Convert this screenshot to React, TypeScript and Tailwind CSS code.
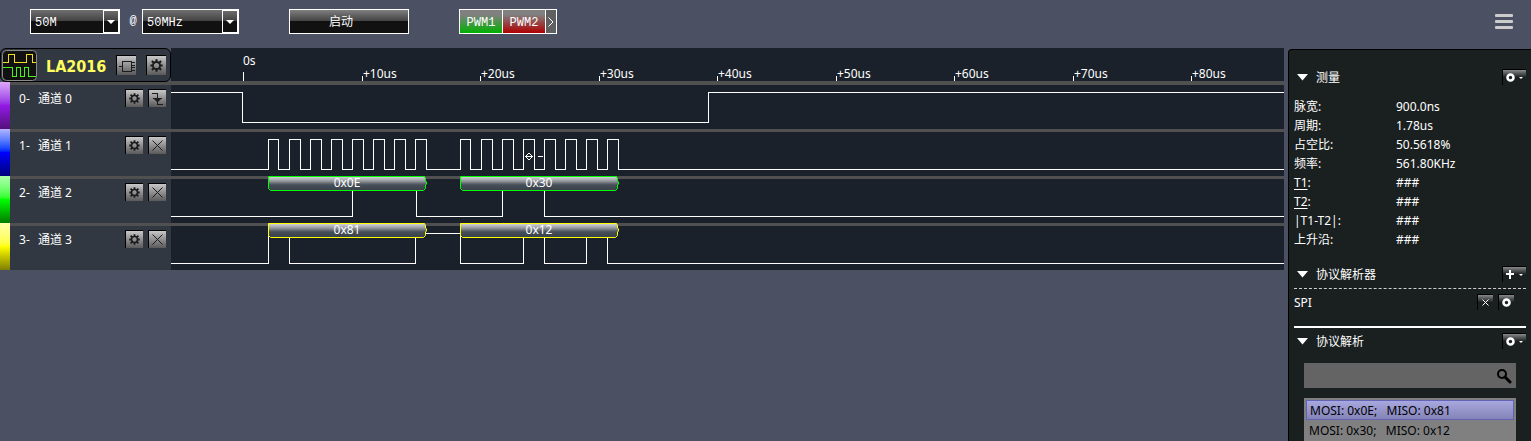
import type { ReactNode } from 'react';

const HIGH = 10.5;
const LOW = 40.5;
const TICK_SPACING = 118.5;
const TICK_START = 72.5;

type Frame = { from: number; to: number; text: string };

type Channel = {
  id: number;
  startsHigh: boolean;
  edges: number[];
  trigger: 'falling' | 'none';
  strip: string;
  frames: Frame[];
  frameColor: string;
};

const channels: Channel[] = [
  {
    id: 0,
    startsHigh: true,
    edges: [71, 537],
    trigger: 'falling',
    strip: 'from-[#dda6f6] via-[#9318e4] to-[#53107c]',
    frames: [],
    frameColor: '#ffffff',
  },
  {
    id: 1,
    startsHigh: false,
    edges: [
      97, 107, 118, 129, 139, 150, 160, 171, 181, 192, 202, 213, 223, 234, 244, 255,
      289, 299, 310, 321, 331, 342, 352, 363, 373, 384, 394, 405, 415, 426, 436, 447,
    ],
    trigger: 'none',
    strip: 'from-[#b4b4ff] via-[#0000ff] to-[#00007c]',
    frames: [],
    frameColor: '#ffffff',
  },
  {
    id: 2,
    startsHigh: false,
    edges: [181, 245, 331, 373],
    trigger: 'none',
    strip: 'from-[#aaffaa] via-[#00ff00] to-[#007c00]',
    frames: [
      { from: 97, to: 255, text: '0x0E' },
      { from: 289, to: 447, text: '0x30' },
    ],
    frameColor: '#00ff00',
  },
  {
    id: 3,
    startsHigh: false,
    edges: [97, 118, 244, 289, 352, 373, 415, 436],
    trigger: 'none',
    strip: 'from-[#ffffaa] via-[#ffff00] to-[#808000]',
    frames: [
      { from: 97, to: 255, text: '0x81' },
      { from: 289, to: 447, text: '0x12' },
    ],
    frameColor: '#ffff00',
  },
];

const measurements = [
  { label: '脉宽:', value: '900.0ns' },
  { label: '周期:', value: '1.78us' },
  { label: '占空比:', value: '50.5618%' },
  { label: '频率:', value: '561.80KHz' },
  { label: 'T1', value: '###', underlined: true },
  { label: 'T2', value: '###', underlined: true },
  { label: '|T1-T2|:', value: '###' },
  { label: '上升沿:', value: '###' },
];

const ticks = ['0s', '+10us', '+20us', '+30us', '+40us', '+50us', '+60us', '+70us', '+80us'];

function wavePath(startsHigh: boolean, edges: number[]) {
  let high = startsHigh;
  let d = `M0 ${high ? HIGH : LOW}`;
  for (const x of edges) {
    high = !high;
    d += `H${x + 0.5}V${high ? HIGH : LOW}`;
  }
  return d;
}

function GearIcon({ size }: { size: number }) {
  return (
    <svg width={size} height={size} viewBox="0 0 11 11" fill="none" stroke="#1c1c1c" aria-hidden="true">
      <circle cx="5.5" cy="5.5" r="3" strokeWidth="1.6" />
      <path d="M5.5 0.3V2.5M5.5 8.5V10.7M0.3 5.5H2.5M8.5 5.5H10.7" strokeWidth="1.8" />
      <path d="M1.6 1.6L3.3 3.3M7.7 7.7L9.4 9.4M9.4 1.6L7.7 3.3M3.3 7.7L1.6 9.4" strokeWidth="1.8" />
    </svg>
  );
}

function ChipIcon() {
  return (
    <svg width="18" height="18" viewBox="0 0 18 18" fill="none" stroke="#1c1c1c" shapeRendering="crispEdges" aria-hidden="true">
      <path d="M4.5 4.5H13.5V14.5H4.5ZM1 9.5H4.5M13.5 5.5H17M13.5 8.5H17M13.5 10.5H17M13.5 13.5H17" />
    </svg>
  );
}

function RailButton({ label, large, children }: { label: string; large?: boolean; children: ReactNode }) {
  return (
    <button
      type="button"
      aria-label={label}
      className={`flex shrink-0 items-center justify-center border-t border-l border-black bg-linear-to-b from-[#c8c8c8] to-[#5a5a5a] ${large ? 'size-5' : 'size-[18px]'}`}
    >
      {children}
    </button>
  );
}

function Ring() {
  return (
    <svg width="9" height="9" viewBox="0 0 9 9" aria-hidden="true">
      <circle cx="4.5" cy="4.5" r="3" fill="none" stroke="#ffffff" strokeWidth="2.6" />
    </svg>
  );
}

function Plus() {
  return (
    <svg width="9" height="9" viewBox="0 0 9 9" fill="#ffffff" shapeRendering="crispEdges" aria-hidden="true">
      <path d="M3 0h2v3h3v2H5v4H3V5H0V3h3z" />
    </svg>
  );
}

function PanelHeader({ title, action, icon }: { title: string; action: string; icon: ReactNode }) {
  return (
    <div className="flex h-5 items-center">
      <svg width="11" height="7" viewBox="0 0 11 7" className="mr-2 ml-[3px]" aria-hidden="true">
        <path d="M0 0H11L5.5 6.5Z" fill="#ffffff" />
      </svg>
      <h2 className="flex-1 pt-0.5">{title}</h2>
      <button
        type="button"
        aria-label={action}
        className="flex h-4 w-6 items-center justify-center gap-1 border-t border-l border-black bg-linear-to-b from-[#8a8a8a] via-[#1a2020] via-50% to-[#1a2020]"
      >
        {icon}
        <svg width="4" height="2" viewBox="0 0 4 2" aria-hidden="true">
          <path d="M0 0H4L2 2Z" fill="#ffffff" />
        </svg>
      </button>
    </div>
  );
}

function SmallButton({ label, children }: { label: string; children: ReactNode }) {
  return (
    <button
      type="button"
      aria-label={label}
      className="flex size-4 items-center justify-center border-t border-l border-black bg-linear-to-b from-[#8a8a8a] via-[#1a2020] via-50% to-[#1a2020]"
    >
      {children}
    </button>
  );
}

function ToolbarSelect({ label, value, width }: { label: string; value: string; width: string }) {
  return (
    <div className={`relative h-[25px] ${width}`}>
      <select
        aria-label={label}
        defaultValue={value}
        className="size-full appearance-none border border-white bg-linear-to-b from-[#707070] from-0% via-[#404040] via-50% to-[#111111] to-50% pt-0.5 pl-1 font-['Liberation_Mono',monospace] text-xs text-white"
      >
        <option>{value}</option>
      </select>
      <span className="pointer-events-none absolute inset-y-px right-px flex w-4 items-center justify-center border border-white">
        <svg width="8" height="4" viewBox="0 0 8 4" aria-hidden="true">
          <path d="M0 0H8L4 4Z" fill="#ffffff" />
        </svg>
      </span>
    </div>
  );
}

function Toolbar() {
  return (
    <header className="flex h-12 shrink-0 items-start pt-[9px] pr-[18px] pl-[30px] font-['Liberation_Mono','Noto_Sans_CJK_SC',monospace] text-xs text-white">
      <ToolbarSelect label="采样深度" value="50M" width="w-[90px]" />
      <span className="w-[22px] pl-1 text-center leading-[25px]">@</span>
      <ToolbarSelect label="采样率" value="50MHz" width="w-[97px]" />
      <button
        type="button"
        className="ml-[50px] h-[25px] w-[120px] border border-white bg-linear-to-b from-[#808080] from-0% via-[#404040] via-50% to-[#111111] to-50% pt-0.5 pr-4"
      >
        启动
      </button>
      <div className="ml-[50px] flex h-[25px] divide-x divide-white border border-white">
        <button type="button" className="w-[43px] bg-linear-to-b/srgb from-[#808080] from-20% to-[#00b000] pt-0.5">PWM1</button>
        <button type="button" className="w-[43px] bg-linear-to-b/srgb from-[#808080] from-20% to-[#b00000] pt-0.5">PWM2</button>
        <button type="button" aria-label="更多" className="flex w-2.5 items-center justify-center bg-[#606060]">
          <svg width="6" height="10" viewBox="0 0 6 10" fill="none" stroke="#ffffff" aria-hidden="true">
            <path d="M0.5 0.5L5 5L0.5 9.5" />
          </svg>
        </button>
      </div>
      <button type="button" aria-label="菜单" className="mt-[5px] ml-auto">
        <svg width="18" height="16" viewBox="0 0 18 16" fill="#cccccc" aria-hidden="true">
          <rect width="18" height="3" rx="1" />
          <rect y="6" width="18" height="3" rx="1" />
          <rect y="12" width="18" height="3" rx="1" />
        </svg>
      </button>
    </header>
  );
}

function DeviceHeader() {
  return (
    <div className="flex h-[34px] w-[171px] shrink-0 items-center rounded-md border border-black bg-[#323841] pr-1 pl-px">
      <svg width="35" height="31" viewBox="0 0 35 31" fill="none" shapeRendering="crispEdges" aria-hidden="true">
        <rect x="0.5" y="0.5" width="34" height="30" rx="4" fill="#111111" stroke="#8a8a8a" shapeRendering="auto" />
        <path d="M1 12.5H6.5V4.5H12.5V12.5H24.5V4.5H30.5V12.5H34" stroke="#f0dc20" />
        <path d="M1 17.5H10.5V26.5H14.5V17.5H18.5V26.5H22.5V17.5H26.5V26.5H34" stroke="#50f020" />
      </svg>
      <h1 className="ml-[9px] flex-1 pt-[3px] font-['DejaVu_Sans_Condensed','DejaVu_Sans',sans-serif] text-base leading-none font-bold text-[#ffff60]">
        LA2016
      </h1>
      <div className="flex gap-2.5">
        <RailButton label="设备" large>
          <ChipIcon />
        </RailButton>
        <RailButton label="设备设置" large>
          <GearIcon size={13} />
        </RailButton>
      </div>
    </div>
  );
}

function Ruler() {
  return (
    <svg className="h-[34px] min-w-0 flex-1 bg-[#1a212a] text-xs" fill="#ffffff">
      <rect y="33" width="100%" height="1" fill="#505050" />
      {ticks.map((label, i) => {
        const x = Math.floor(TICK_START + i * TICK_SPACING);
        return (
          <g key={label}>
            <rect x={x} y={i === 0 ? 24 : 28} width="1" height={i === 0 ? 9 : 5} />
            <text x={i === 0 ? x : x + 1} y={i === 0 ? 17 : 30}>{label}</text>
          </g>
        );
      })}
    </svg>
  );
}

function ChannelRow({ channel }: { channel: Channel }) {
  const name = `通道 ${channel.id}`;
  const edges = channel.edges;
  const endsHigh = channel.startsHigh !== (edges.length % 2 === 1);
  const restLevel = endsHigh ? HIGH : LOW;
  return (
    <div className="flex h-[47px]">
      <div className={`w-2.5 shrink-0 bg-linear-to-b ${channel.strip}`} />
      <div className="flex w-[161px] shrink-0 items-start border-t-[3px] border-[#505050] bg-[#323841] pt-1 pr-[5px] pl-[9px]">
        <span className="w-[19px] leading-5">{channel.id}-</span>
        <span className="flex-1 leading-5">{name}</span>
        <div className="flex gap-[5px]">
          <RailButton label={`${name} 设置`}>
            <GearIcon size={11} />
          </RailButton>
          <RailButton label={`${name} 触发`}>
            {channel.trigger === 'falling' ? (
              <svg width="13" height="13" viewBox="0 0 13 13" fill="none" stroke="#1c1c1c" aria-hidden="true">
                <path d="M1 1.5H6.5V12.5H12" shapeRendering="crispEdges" />
                <path d="M3 7H10L6.5 10.5Z" fill="#1c1c1c" stroke="none" />
                <path d="M2 6.5H11" shapeRendering="crispEdges" />
              </svg>
            ) : (
              <svg width="11" height="11" viewBox="0 0 11 11" stroke="#1c1c1c" aria-hidden="true">
                <path d="M0.5 0.5L10.5 10.5M10.5 0.5L0.5 10.5" />
              </svg>
            )}
          </RailButton>
        </div>
      </div>
      <svg className="h-[47px] min-w-0 flex-1 overflow-visible bg-[#1a212a] text-xs">
        <defs>
          <linearGradient id={`frame-${channel.id}`} x1="0" y1="0" x2="0" y2="1">
            <stop offset="0" stopColor="#d8d8dc" />
            <stop offset="0.3" stopColor="#9a9da3" />
            <stop offset="0.6" stopColor="#464e57" />
            <stop offset="1" stopColor="#38414b" />
          </linearGradient>
        </defs>
        <rect width="100%" height="3" fill="#505050" />
        <path d={wavePath(channel.startsHigh, edges)} fill="none" stroke="#ffffff" shapeRendering="crispEdges" />
        <line x1={edges[edges.length - 1]} x2="100%" y1={restLevel} y2={restLevel} stroke="#ffffff" shapeRendering="crispEdges" />
        {channel.id === 1 && (
          <g stroke="#ffffff" fill="none">
            <path d="M354 27.5H362M367 27.5H372" shapeRendering="crispEdges" />
            <path d="M354.5 27.5L358 24L361.5 27.5L358 31Z" />
          </g>
        )}
        {channel.frames.map(({ from, to, text }) => (
          <g key={from}>
            <path
              d={`M${from + 0.5} 0.5H${to - 1.5}L${to - 0.5} 2.5V5L${to + 0.5} 6V8L${to - 0.5} 9V12.5L${to - 2.5} 14.5H${from + 2.5}L${from + 0.5} 12.5Z`}
              fill={`url(#frame-${channel.id})`}
              stroke={channel.frameColor}
            />
            <text x={(from + to) / 2} y="11" textAnchor="middle" fill="#ffffff">{text}</text>
          </g>
        ))}
      </svg>
    </div>
  );
}

function SidePanel() {
  return (
    <aside className="mt-px ml-1 flex w-[243px] shrink-0 flex-col overflow-hidden rounded-tl border-t border-l border-black bg-[#1a2020] pt-[17px] pr-[5px] pl-[5px]">
      <PanelHeader title="测量" action="测量设置" icon={<Ring />} />
      <dl className="mt-2.5">
        {measurements.map(({ label, value, underlined }) => (
          <div key={label} className="grid h-[19px] grid-cols-[102px_1fr] items-center">
            <dt>{underlined ? <><span className="underline underline-offset-2">{label}</span>:</> : label}</dt>
            <dd>{value}</dd>
          </div>
        ))}
      </dl>
      <div className="mt-[15px] border-b border-dashed border-[#d0d0d0] pb-1">
        <PanelHeader title="协议解析器" action="添加解析器" icon={<Plus />} />
      </div>
      <div className="flex items-center border-b-2 border-white pt-[3px] pr-3 pb-[14px]">
        <span className="flex-1 pt-px leading-[19px]">SPI</span>
        <div className="flex gap-[5px]">
          <SmallButton label="删除 SPI">
            <svg width="7" height="7" viewBox="0 0 7 7" stroke="#ffffff" aria-hidden="true">
              <path d="M0.5 0.5L6.5 6.5M6.5 0.5L0.5 6.5" />
            </svg>
          </SmallButton>
          <SmallButton label="SPI 设置">
            <Ring />
          </SmallButton>
        </div>
      </div>
      <div className="mt-[3px]">
        <PanelHeader title="协议解析" action="解析设置" icon={<Ring />} />
      </div>
      <label className="mx-2.5 mt-3 flex h-[25px] shrink-0 items-center bg-[#646464] pr-1 pl-1">
        <input type="text" aria-label="搜索" className="min-w-0 flex-1 bg-transparent outline-none" />
        <svg width="16" height="16" viewBox="0 0 16 16" fill="none" stroke="#000000" aria-hidden="true">
          <circle cx="6" cy="6" r="4" strokeWidth="2" />
          <path d="M9 9L14 14" strokeWidth="3" strokeLinecap="round" />
        </svg>
      </label>
      <ul className="mx-2.5 mt-2.5 flex-1 bg-[#808080] px-0.5 pt-0.5 text-black">
        <li className="h-5 border border-[#6464b4] bg-linear-to-b from-[#a8a8e0] to-[#8484b8] pl-[3px] leading-5 whitespace-pre">
          {'MOSI: 0x0E;   MISO: 0x81'}
        </li>
        <li className="h-5 pl-[3px] leading-[21px] whitespace-pre">{'MOSI: 0x30;   MISO: 0x12'}</li>
      </ul>
    </aside>
  );
}

export default function App() {
  return (
    <div className="flex h-screen flex-col overflow-hidden bg-[#4b5062] font-['Noto_Sans','Noto_Sans_CJK_SC',sans-serif] text-xs text-white">
      <Toolbar />
      <div className="flex min-h-0 flex-1">
        <main className="min-w-0 flex-1">
          <div className="flex">
            <DeviceHeader />
            <Ruler />
          </div>
          {channels.map((channel) => (
            <ChannelRow key={channel.id} channel={channel} />
          ))}
        </main>
        <SidePanel />
      </div>
    </div>
  );
}
